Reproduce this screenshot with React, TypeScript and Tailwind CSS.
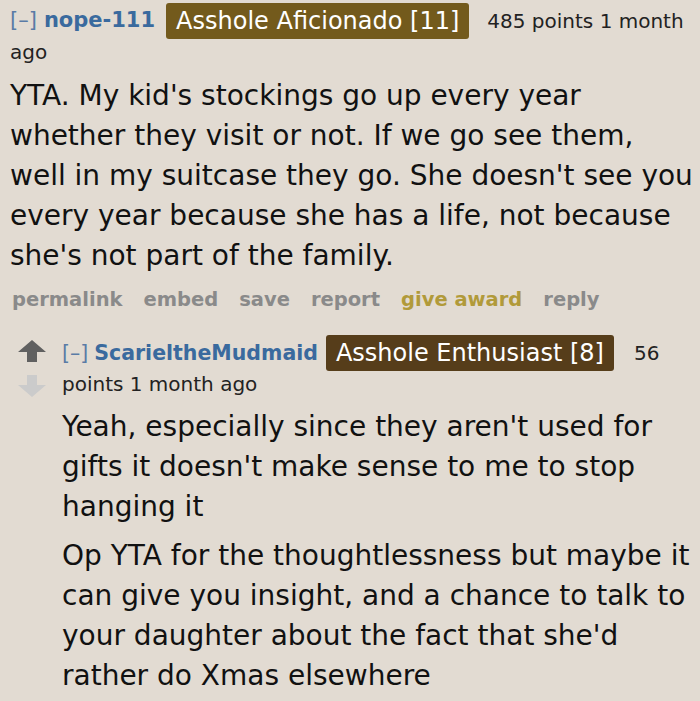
import React from "react";

const font = { fontFamily: '"DejaVu Sans", Verdana, sans-serif' };

function Arrow({ up, color }: { up?: boolean; color: string }) {
  return (
    <svg width="28" height="22" viewBox="0 0 28 22" className={up ? "" : "rotate-180"}>
      <path d="M14 0 L28 12 L19 12 L19 22 L9 22 L9 12 L0 12 Z" fill={color} />
    </svg>
  );
}

export default function App() {
  return (
    <div className="w-[700px] h-[701px] bg-[#e2dbd2] overflow-hidden text-[#111]" style={font}>
      <div className="pl-[10px] pr-1 pt-[3px]">
        <div className="flex items-center h-[36px] text-[20px] text-[#222] whitespace-nowrap">
          <span className="text-[21px] text-[#5a7ba6]">[–]</span>
          <span className="ml-[7px] text-[21px] text-[#3a6a9e] font-bold">nope-111</span>
          <span className="ml-[11px] mr-[18px] bg-[#735a1c] text-white text-[24px] leading-[36px] px-[10px] rounded-[3px]">
            Asshole Aficionado [11]
          </span>
          <span>485 points 1 month</span>
        </div>
        <div className="text-[20px] leading-[26px] text-[#222]">ago</div>
        <div className="mt-[11px] text-[28px] leading-[40px]">
          YTA. My kid's stockings go up every year whether they visit or not. If we go see them, well in my suitcase they go. She doesn't see you every year because she has a life, not because she's not part of the family.
        </div>
        <div className="flex mt-[11px] text-[19.5px] leading-[26px] font-bold text-[#8a8a8a] gap-[21px] pl-[2px]">
          <span>permalink</span>
          <span>embed</span>
          <span>save</span>
          <span>report</span>
          <span className="text-[#b19a3a]">give award</span>
          <span>reply</span>
        </div>
      </div>
      <div className="flex mt-[22px] pl-[18px]">
        <div className="flex flex-col gap-[13px] pt-[5px] w-[44px] shrink-0">
          <Arrow up color="#606060" />
          <Arrow color="#cbcbcb" />
        </div>
        <div className="flex-1 pr-1">
          <div className="flex items-center h-[36px] text-[20px] text-[#222] whitespace-nowrap">
            <span className="text-[20.5px] text-[#5a7ba6]">[–]</span>
            <span className="ml-[6px] text-[20.5px] text-[#3a6a9e] font-bold">ScarieltheMudmaid</span>
            <span className="ml-[8px] mr-[20px] bg-[#563d1a] text-white text-[24px] leading-[36px] px-[10px] rounded-[3px]">
              Asshole Enthusiast [8]
            </span>
            <span>56</span>
          </div>
          <div className="text-[20px] leading-[26px] text-[#222]">points 1 month ago</div>
          <div className="mt-[10px] text-[28px] leading-[40px]">
            Yeah, especially since they aren't used for gifts it doesn't make sense to me to stop hanging it
          </div>
          <div className="mt-[9px] text-[28px] leading-[40px]">
            Op YTA for the thoughtlessness but maybe it can give you insight, and a chance to talk to your daughter about the fact that she'd rather do Xmas elsewhere
          </div>
        </div>
      </div>
    </div>
  );
}
